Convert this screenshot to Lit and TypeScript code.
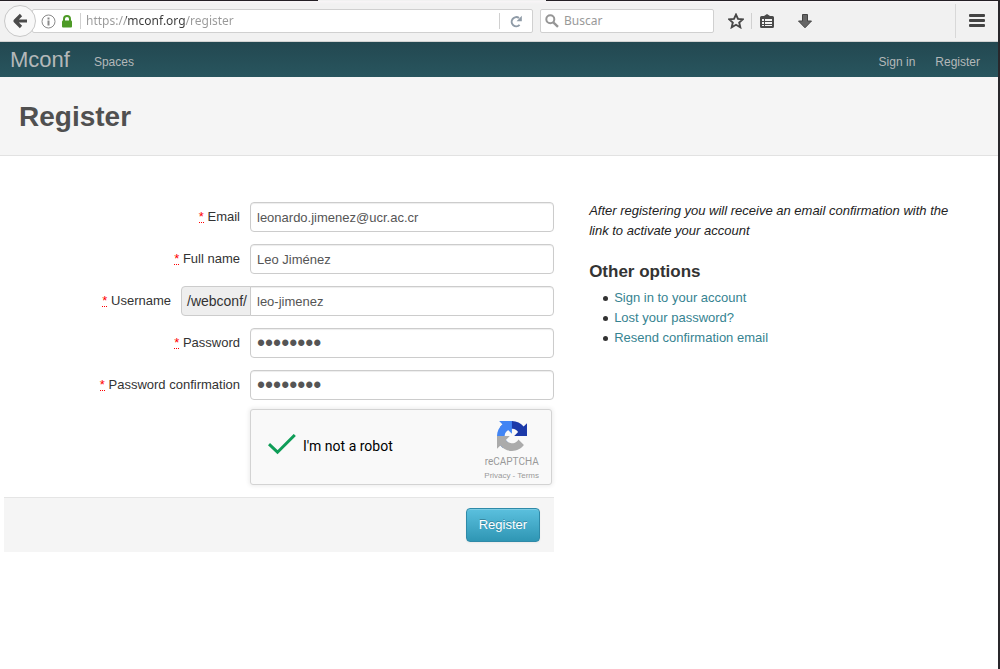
import { LitElement, html, css, nothing } from "lit";
import { customElement } from "lit/decorators.js";

@customElement("browser-toolbar")
export class BrowserToolbar extends LitElement {
  static styles = css`
    :host {
      display: block;
      font-family: "Noto Sans", sans-serif;
    }
    .tabs-edge {
      display: grid;
      grid-template-columns: 318fr 228fr 452fr;
      height: 1px;
      background: #231f24;
    }
    .active-tab {
      grid-column: 2;
      background: #f1f1f1;
    }
    .bar {
      display: flex;
      align-items: center;
      height: 40px;
      padding-left: 4px;
      background: linear-gradient(#f8f5f7, #f1f1f1 3px);
      border-bottom: 1px solid #d2d2d2;
    }
    button {
      display: flex;
      align-items: center;
      justify-content: center;
      flex: none;
      padding: 0;
      border: 0;
      background: none;
    }
    svg {
      display: block;
    }
    .back {
      width: 32px;
      height: 32px;
      border: 1px solid #c8c8c8;
      border-radius: 50%;
      background: #f8f8f8;
      z-index: 1;
      box-sizing: border-box;
    }
    .box {
      display: flex;
      align-items: center;
      box-sizing: border-box;
      height: 24px;
      border: 1px solid #d0d0d0;
      border-radius: 2px;
      background: #fff;
    }
    .address {
      flex: 1;
      margin-left: -4px;
      padding-left: 8px;
    }
    .search {
      width: 174px;
      margin-left: 7px;
      padding-left: 4px;
      gap: 5px;
    }
    input {
      flex: 1;
      min-width: 0;
      height: 22px;
      padding: 0;
      border: 0;
      outline: 0;
      background: none;
      font: 12px/22px "Noto Sans", sans-serif;
    }
    .url {
      color: transparent;
      background: linear-gradient(90deg, #999 40px, #3a3a3a 40px 99px, #999 99px);
      -webkit-background-clip: text;
      background-clip: text;
    }
    .term::placeholder {
      color: #999;
      opacity: 1;
    }
    .info {
      width: 15px;
    }
    .lock {
      width: 12px;
      margin-left: 5px;
    }
    .line {
      flex: none;
      width: 1px;
      height: 16px;
      background: #d0d0d0;
    }
    .after-lock {
      margin: 0 5px 0 7px;
    }
    .reload {
      width: 32px;
      height: 22px;
    }
    .tool {
      width: 30px;
      height: 30px;
    }
    .tools {
      display: flex;
      align-items: center;
      width: 241px;
      padding-left: 7px;
      box-sizing: border-box;
    }
    .download {
      margin-left: 8px;
    }
    .menu {
      display: flex;
      align-items: center;
      width: 43px;
      height: 34px;
      box-sizing: border-box;
      border-left: 1px solid #d8d8d8;
      padding-left: 6px;
    }
  `;

  render() {
    return html`
      <div class="tabs-edge"><span class="active-tab"></span></div>
      <div class="bar">
        <button class="back" aria-label="Back">
          <svg width="16" height="16" viewBox="0 0 16 16" fill="none" stroke="#4b4b4b" stroke-width="3.2">
            <path d="M3 8h12M9 2 3 8l6 6" stroke-linejoin="round" />
          </svg>
        </button>
        <div class="box address">
          <button class="info" aria-label="Site information">
            <svg width="15" height="15" viewBox="0 0 15 15">
              <circle cx="7.5" cy="7.5" r="6.5" fill="none" stroke="#8a8a8a" />
              <path d="M6.5 3.5h2v2h-2zM6.5 6.5h2v5h-2z" fill="#8a8a8a" />
            </svg>
          </button>
          <button class="lock" aria-label="Secure connection">
            <svg width="12" height="13" viewBox="0 0 12 13">
              <path d="M3 6V4a3 3 0 0 1 6 0v2" fill="none" stroke="#4d9a26" stroke-width="2" />
              <rect x="1" y="5.5" width="10" height="7" rx="1" fill="#4d9a26" />
            </svg>
          </button>
          <span class="line after-lock"></span>
          <input class="url" aria-label="Address" value="https://mconf.org/register" />
          <span class="line"></span>
          <button class="reload" aria-label="Reload">
            <svg width="13" height="13" viewBox="0 0 13 13">
              <path d="M9.6 9.9A4.6 4.6 0 1 1 9 3" fill="none" stroke="#8f9ba7" stroke-width="2" />
              <path d="M11.8.8v5.4H6.6z" fill="#8f9ba7" />
            </svg>
          </button>
        </div>
        <div class="box search">
          <svg width="14" height="14" viewBox="0 0 14 14" fill="none" stroke="#969696">
            <circle cx="5.3" cy="5.3" r="4" stroke-width="2" />
            <path d="m8.3 8.3 4.7 4.5" stroke-width="2.4" />
          </svg>
          <input class="term" aria-label="Search" placeholder="Buscar" />
        </div>
        <div class="tools">
          <button class="tool" aria-label="Bookmark this page">
            <svg width="16" height="16" viewBox="0 0 16 16">
              <path d="m8 1.6 2 4.3 4.8.5-3.6 3.1 1.1 4.8L8 11.8l-4.3 2.5 1.1-4.8-3.6-3.1 4.8-.5z" fill="none" stroke="#474747" stroke-width="1.9" />
            </svg>
          </button>
          <span class="line"></span>
          <button class="tool" aria-label="Bookmarks list">
            <svg width="14" height="15" viewBox="0 0 14 15">
              <path d="M1.500 2H4l3-2 3 2h2.500A1.500 1.500 0 0 1 14 3.500v9a1.500 1.500 0 0 1-1.500 1.500h-11A1.500 1.500 0 0 1 0 12.500v-9A1.500 1.500 0 0 1 1.500 2z" fill="#4a4a4a" />
              <path d="M2 5h2v2H2zM5 5h7v2H5zM2 8h2v2H2zM5 8h7v2H5zM2 11h2v1H2zM5 11h7v1H5z" fill="#f4f4f4" />
            </svg>
          </button>
          <button class="tool download" aria-label="Downloads">
            <svg width="14" height="15" viewBox="0 0 14 15">
              <path d="M4.500.500h5V7H13.500L7 13.800.500 7h4z" fill="#666" stroke="#444" stroke-linejoin="round" />
            </svg>
          </button>
        </div>
        <div class="menu">
          <button class="tool" aria-label="Open menu">
            <svg width="16" height="14" viewBox="0 0 16 14" fill="#444">
              <rect y="0" width="16" height="3" rx="1" />
              <rect y="5" width="16" height="3" rx="1" />
              <rect y="10" width="16" height="3" rx="1" />
            </svg>
          </button>
        </div>
      </div>
    `;
  }
}

@customElement("recaptcha-box")
export class RecaptchaBox extends LitElement {
  static styles = css`
    :host {
      display: block;
      width: 302px;
    }
    .box {
      display: flex;
      align-items: center;
      height: 76px;
      box-sizing: border-box;
      padding: 0 12px 0 17px;
      border: 1px solid #d3d3d3;
      border-radius: 3px;
      background: #f9f9f9;
      box-shadow: 0 0 4px 1px rgba(0, 0, 0, 0.08);
    }
    .status {
      flex: 1;
      display: flex;
      align-items: center;
      gap: 7px;
      padding-bottom: 2px;
      font: 14px/17px Roboto, sans-serif;
      color: #000;
    }
    svg {
      display: block;
    }
    .brand {
      display: flex;
      flex-direction: column;
      align-items: center;
      color: #999;
      padding-top: 9px;
    }
    .name {
      margin-top: 4px;
      font: 10px/13px Roboto, sans-serif;
    }
    .legal {
      display: flex;
      gap: 2px;
      margin-top: 2px;
      font: 8px/12px "Liberation Sans", Arial, sans-serif;
    }
    a {
      color: inherit;
      text-decoration: none;
    }
  `;

  render() {
    return html`
      <div class="box">
        <div class="status">
          <svg width="28" height="24" viewBox="0 0 28 24">
            <path d="m1 10.200 8.500 8L26.800 1" fill="none" stroke="#0f9d58" stroke-width="3" />
          </svg>
          <span>I'm not a robot</span>
        </div>
        <div class="brand">
          <svg width="30" height="30" viewBox="0 0 64 64">
            <path fill="#1c3aa9" d="M64 31.955l-.033-1.370V4.687l-7.160 7.160C50.948 4.674 42.033.093 32.050.093c-10.400 0-19.622 4.960-25.458 12.640l11.736 11.860a15.550 15.550 0 0 1 4.754-5.334c2.050-1.600 4.952-2.906 8.968-2.906.485 0 .860.057 1.135.163 4.976.393 9.288 3.140 11.828 7.124l-8.307 8.307L64 31.953" />
            <path fill="#4285f4" d="M31.862.094l-1.370.033H4.594l7.160 7.160C4.580 13.147 0 22.060 0 32.046c0 10.400 4.960 19.622 12.640 25.458L24.500 45.768a15.550 15.550 0 0 1-5.334-4.754c-1.600-2.050-2.906-4.952-2.906-8.968 0-.485.057-.860.163-1.135.393-4.976 3.140-9.288 7.124-11.828l8.307 8.307L31.860.095" />
            <path fill="#ababab" d="M.001 32.045l.033 1.370v25.898l7.160-7.160c5.860 7.173 14.774 11.754 24.760 11.754 10.400 0 19.622-4.960 25.458-12.640l-11.736-11.860a15.550 15.550 0 0 1-4.754 5.334c-2.050 1.600-4.952 2.906-8.968 2.906-.485 0-.860-.057-1.135-.163-4.976-.393-9.288-3.140-11.828-7.124l8.307-8.307c-10.522.040-22.400.066-27.295-.005" />
          </svg>
          <span class="name">reCAPTCHA</span>
          <span class="legal"><a href="#privacy">Privacy</a><span>-</span><a href="#terms">Terms</a></span>
        </div>
      </div>
    `;
  }
}

interface Field {
  id: string;
  label: string;
  value: string;
  type: string;
  prefix?: string;
}

const FIELDS: Field[] = [
  { id: "email", label: "Email", value: "leonardo.jimenez@ucr.ac.cr", type: "email" },
  { id: "full-name", label: "Full name", value: "Leo Jiménez", type: "text" },
  { id: "username", label: "Username", value: "leo-jimenez", type: "text", prefix: "/webconf/" },
  { id: "password", label: "Password", value: "12345678", type: "password" },
  { id: "password-confirmation", label: "Password confirmation", value: "12345678", type: "password" },
];

@customElement("app-root")
export class AppRoot extends LitElement {
  static styles = css`
    :host {
      display: block;
      box-sizing: border-box;
      min-height: 100vh;
      border-right: 2px solid #29272b;
      background: #fff;
      color: #333;
      font: 13px/20px "Liberation Sans", Arial, sans-serif;
    }
    a {
      color: #368391;
      text-decoration: none;
    }
    .nav {
      display: flex;
      align-items: center;
      height: 35px;
      padding: 0 18px 0 10px;
      background: linear-gradient(#234851, #28555e);
      font-size: 12px;
    }
    .nav a {
      color: #b4b8b9;
    }
    .nav .brand {
      margin-right: 24px;
      font-size: 22px;
    }
    .links {
      display: flex;
      gap: 20px;
      margin-left: auto;
      padding-top: 4px;
    }
    .nav .spaces {
      padding-top: 4px;
    }
    .title {
      padding: 20px 19px 18px;
      background: #f5f5f5;
      border-bottom: 1px solid #e2e2e2;
    }
    h1 {
      margin: 0;
      color: #505050;
      font-size: 28px;
      line-height: 40px;
    }
    .content {
      display: grid;
      grid-template-columns: minmax(0, 13fr) minmax(0, 9fr);
      gap: 35px;
      padding: 45px 28px 0 4px;
    }
    form {
      padding-top: 1px;
    }
    .fields {
      display: flex;
      flex-direction: column;
      gap: 12px;
    }
    .row {
      display: flex;
      align-items: center;
    }
    .label {
      flex: none;
      width: 236px;
      margin-right: 10px;
      text-align: right;
    }
    .with-prefix .label {
      width: 167px;
    }
    abbr {
      color: #f00;
      text-decoration: none;
      border-bottom: 1px dotted #f00;
      line-height: 14px;
      display: inline-block;
      height: 12px;
    }
    .prefix {
      flex: none;
      width: 70px;
      height: 30px;
      margin-right: -1px;
      box-sizing: border-box;
      padding-left: 5px;
      border: 1px solid #ccc;
      border-radius: 4px 0 0 4px;
      background: #eee;
      font-size: 14px;
      line-height: 28px;
    }
    .input {
      flex: 1;
      min-width: 0;
      height: 30px;
      box-sizing: border-box;
      margin: 0;
      padding: 0 6px;
      border: 1px solid #ccc;
      border-radius: 4px;
      background: #fff;
      box-shadow: inset 0 1px 1px rgba(0, 0, 0, 0.075);
      color: #555;
      font: inherit;
    }
    .input[type="password"] {
      font-size: 23px;
    }
    .with-prefix .input {
      border-radius: 0 4px 4px 0;
    }
    .captcha {
      margin: 9px 0 12px 246px;
    }
    .actions {
      display: flex;
      justify-content: flex-end;
      padding: 10px 14px;
      border-top: 1px solid #e5e5e5;
      background: #f5f5f5;
    }
    .submit {
      height: 34px;
      padding: 0 12px;
      border: 1px solid #2f8aa8;
      border-radius: 4px;
      background: linear-gradient(#5bc0de, #2f96b4);
      box-shadow: inset 0 1px 0 rgba(255, 255, 255, 0.2), 0 1px 2px rgba(0, 0, 0, 0.05);
      color: #fff;
      font: inherit;
      text-shadow: 0 -1px 0 rgba(0, 0, 0, 0.25);
    }
    .note {
      margin: 0;
      font-style: italic;
      color: #222;
    }
    h2 {
      margin: 21px 0 6px;
      font-size: 17px;
      line-height: 20px;
    }
    ul {
      margin: 0;
      padding-left: 14px;
      list-style: none;
    }
    li {
      display: flex;
      align-items: center;
      gap: 6px;
    }
    li::before {
      content: "";
      width: 5px;
      height: 5px;
      border-radius: 50%;
      background: #333;
    }
  `;

  private renderField(field: Field) {
    return html`
      <div class="row ${field.prefix ? "with-prefix" : ""}">
        <label class="label" for=${field.id}><abbr title="required">*</abbr> ${field.label}</label>
        ${field.prefix ? html`<span class="prefix">${field.prefix}</span>` : nothing}
        <input class="input" id=${field.id} type=${field.type} .value=${field.value} />
      </div>
    `;
  }

  render() {
    return html`
      <browser-toolbar></browser-toolbar>
      <nav class="nav">
        <a class="brand" href="#home">Mconf</a>
        <a class="spaces" href="#spaces">Spaces</a>
        <div class="links">
          <a href="#sign-in">Sign in</a>
          <a href="#register">Register</a>
        </div>
      </nav>
      <header class="title"><h1>Register</h1></header>
      <main class="content">
        <form @submit=${(event: Event) => event.preventDefault()}>
          <div class="fields">${FIELDS.map((field) => this.renderField(field))}</div>
          <recaptcha-box class="captcha"></recaptcha-box>
          <div class="actions"><button class="submit" type="submit">Register</button></div>
        </form>
        <aside>
          <p class="note">
            After registering you will receive an email confirmation with the link to activate your account
          </p>
          <h2>Other options</h2>
          <ul>
            <li><a href="#sign-in">Sign in to your account</a></li>
            <li><a href="#password">Lost your password?</a></li>
            <li><a href="#confirmation">Resend confirmation email</a></li>
          </ul>
        </aside>
      </main>
    `;
  }
}
